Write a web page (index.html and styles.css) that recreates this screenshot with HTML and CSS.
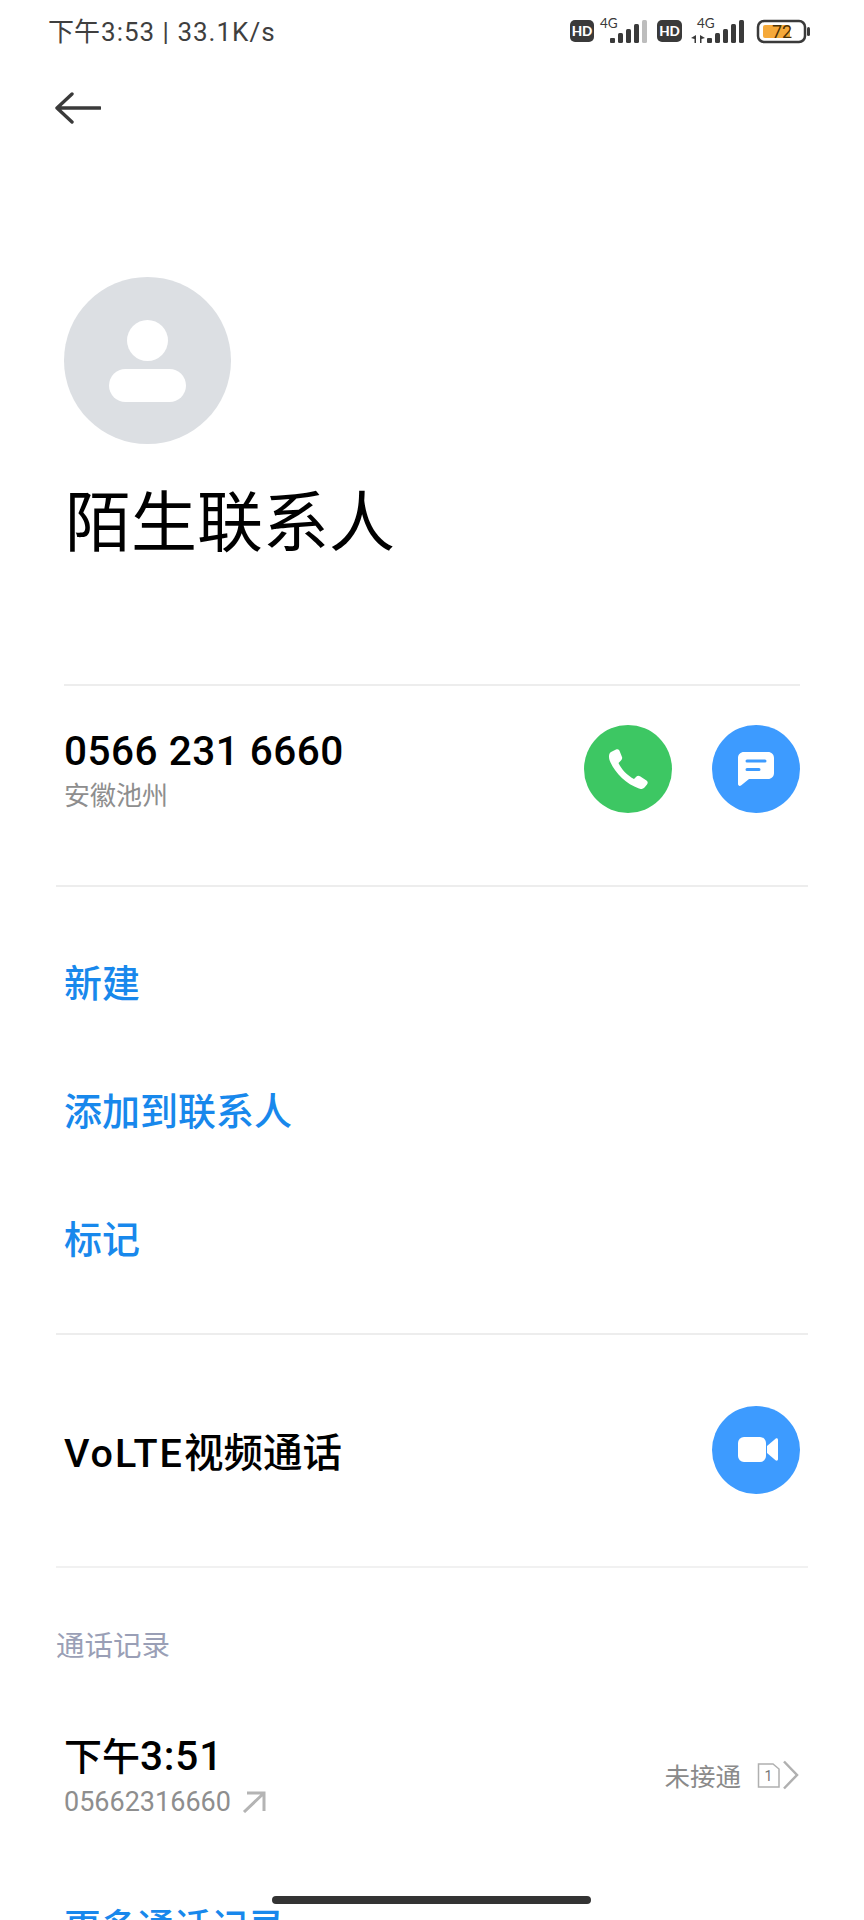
FILE: index.html
```html
<!DOCTYPE html>
<html lang="zh-CN">
<head>
<meta charset="utf-8">
<title>陌生联系人</title>
<link rel="stylesheet" href="styles.css">
</head>
<body>
<div class="screen">
  <header class="statusbar">
    <span class="status-text">下午<span class="status-latin">3:53 | 33.1K/s</span></span>
    <svg class="status-icons" width="244" height="30" viewBox="0 0 244 30">
      <rect x="0" y="5" width="24" height="22" rx="5" fill="#3a3a3a"/>
      <text x="12" y="21" class="hd">HD</text>
      <text x="30" y="13" class="net">4G</text>
      <g fill="#3a3a3a">
        <rect x="40" y="23" width="5" height="5" rx="1"/>
        <rect x="48" y="18" width="5" height="10" rx="1.500"/>
        <rect x="56" y="14" width="5" height="14" rx="1.500"/>
        <rect x="64" y="9" width="5" height="19" rx="1.500"/>
      </g>
      <rect x="72" y="5" width="5" height="23" rx="1.500" fill="#bdbdbd"/>
      <rect x="87" y="5" width="25" height="22" rx="5" fill="#3a3a3a"/>
      <text x="99.500" y="21" class="hd">HD</text>
      <text x="127" y="13" class="net">4G</text>
      <g fill="#3a3a3a">
        <path d="M121 23l5-3v8h-1.500v-4zM135 23l-5-3v8h1.500v-4z"/>
        <rect x="137" y="23" width="5" height="5" rx="1"/>
        <rect x="145" y="18" width="5" height="10" rx="1.500"/>
        <rect x="153" y="14" width="5" height="14" rx="1.500"/>
        <rect x="161" y="9" width="5" height="19" rx="1.500"/>
        <rect x="169" y="5" width="5" height="23" rx="1.500"/>
      </g>
      <rect x="188" y="6" width="47" height="21" rx="6" fill="none" stroke="#3a3a3a" stroke-width="2.500"/>
      <rect x="193" y="10" width="27" height="13" rx="2" fill="#f5a93a"/>
      <rect x="237" y="12" width="3" height="9" rx="1.500" fill="#3a3a3a"/>
      <text x="212" y="23" class="bat">72</text>
    </svg>
  </header>

  <nav class="toolbar">
    <svg width="46" height="32" viewBox="0 0 46 32" fill="none" stroke="#3a3a3a" stroke-width="3.400" stroke-linecap="round" stroke-linejoin="round">
      <path d="M2 16H45M17 2L2 16L17 30"/>
    </svg>
  </nav>

  <section class="hero">
    <div class="avatar">
      <span class="avatar-head"></span>
      <span class="avatar-body"></span>
    </div>
    <h1 class="name">陌生联系人</h1>
  </section>

  <section class="number-row">
    <div class="number-text">
      <div class="number">0566 231 6660</div>
      <div class="location">安徽池州</div>
    </div>
    <div class="actions">
      <span class="round green">
        <svg width="40" height="40" viewBox="0 0 40 40"><path fill="#fff" d="M3 3L8 .5C10 -.3 11 .5 11.600 2L14 8C14.500 9.500 14 10.500 13 11.500L10.500 14C13 20 20 27 26 30L28.500 27.500C29.500 26.500 30.500 26.300 32 27.200L38.500 31.500C40 32.600 40 34 39 35.500L36.500 38.500C35 40 33 40.500 31 39.500C18 35 6 23 1.500 11C.5 7 1 4.500 3 3Z"/></svg>
      </span>
      <span class="round blue">
        <svg width="36" height="34" viewBox="0 0 36 34"><path fill="#fff" d="M6 0H30C33.500 0 36 2.500 36 6V21C36 24.500 33.500 27 30 27H11L3 33.500C1.500 34.500 0 33.500 0 32V6C0 2.500 2.500 0 6 0Z"/><path d="M9 9H27M9 17.500H21" stroke="#3d9bff" stroke-width="3" stroke-linecap="round"/></svg>
      </span>
    </div>
  </section>

  <section class="links">
    <a class="link">新建</a>
    <a class="link">添加到联系人</a>
    <a class="link">标记</a>
  </section>

  <section class="volte-row">
    <span class="volte"><span class="volte-latin">VoLTE</span>视频通话</span>
    <span class="round blue">
      <svg class="video-icon" width="40" height="25" viewBox="0 0 40 25"><rect width="28" height="25" rx="6" fill="#fff"/><path fill="#fff" d="M29 9L37.500 1.800C38.800 .8 40 1.500 40 3V22C40 23.500 38.800 24.200 37.500 23.200L29 16Z"/></svg>
    </span>
  </section>

  <section class="history">
    <h2 class="history-title">通话记录</h2>
    <div class="call">
      <div class="call-main">
        <div class="call-time">下午<span class="time-latin">3:51</span></div>
        <div class="call-number">
          <span>05662316660</span>
          <svg width="24" height="22" viewBox="0 0 24 22" fill="none" stroke="#b4b4b4" stroke-width="3"><path d="M2 21L22 2M5 2H22V20"/></svg>
        </div>
      </div>
      <div class="call-state">
        <span>未接通</span>
        <svg width="44" height="30" viewBox="0 0 44 30" fill="none">
          <path d="M1.500 4H16L22 9V27H1.500Z" stroke="#b0b0b0" stroke-width="1.500"/>
          <text x="11.500" y="21" class="sim">1</text>
          <path d="M27 1.500L40 15L27 28.500" stroke="#b0b0b0" stroke-width="2.500"/>
        </svg>
      </div>
    </div>
    <a class="link more">更多通话记录</a>
  </section>

  <div class="home-bar"></div>
</div>
</body>
</html>
```
FILE: styles.css
```css
* { box-sizing: border-box; }
html, body { margin: 0; padding: 0; background: #fff; }
body { font-family: Roboto, "Noto Sans CJK SC", sans-serif; color: #000; }
.screen { position: relative; width: 864px; height: 1920px; overflow: hidden; background: #fff; }

.statusbar { height: 64px; display: flex; align-items: center; justify-content: space-between; padding: 0 50px 0 48px; }
.status-text { font-size: 26px; color: #3f3f3f; line-height: 64px; }
.status-latin { letter-spacing: 1px; margin-left: 1px; }
.status-icons { display: block; margin-top: -4px; }
.hd { font: 900 13.500px Lato, sans-serif; fill: #fff; text-anchor: middle; }
.net { font: 400 13.500px Lato, sans-serif; fill: #3a3a3a; }
.bat { font: 400 18px Roboto, sans-serif; fill: #4a3208; text-anchor: middle; }
.sim { font: 400 14px Roboto, sans-serif; fill: #777; text-anchor: middle; }

.toolbar { height: 90px; padding: 28px 0 0 55px; }
.toolbar svg { display: block; }

.hero { height: 532px; margin: 0 64px; padding-top: 123px; border-bottom: 2px solid #ededed; }
.avatar { position: relative; width: 167px; height: 167px; border-radius: 50%; background: #dcdfe3; }
.avatar-head { position: absolute; left: 63px; top: 43px; width: 41px; height: 41px; border-radius: 50%; background: #fff; }
.avatar-body { position: absolute; left: 45px; top: 92px; width: 77px; height: 33px; border-radius: 17px; background: #fff; }
.name { margin: 36px 0 0 1px; font-size: 66px; line-height: 88px; font-weight: 400; }

.number-row { display: flex; align-items: flex-start; justify-content: space-between; height: 201px; margin: 0 56px; padding: 39px 8px 0; border-bottom: 2px solid #ededed; }
.number-text { padding-top: 3px; }
.number { font-size: 40.500px; line-height: 46px; font-weight: 500; letter-spacing: .5px; }
.location { font-size: 26px; line-height: 36px; color: #8e8e8e; margin-top: 4px; }
.actions { display: flex; gap: 40px; }
.round { display: flex; align-items: center; justify-content: center; width: 88px; height: 88px; border-radius: 50%; flex: none; }
.green { background: #3dc763; }
.blue { background: #3d9bff; }

.links { display: flex; flex-direction: column; margin: 0 56px; padding: 33px 8px 29px; border-bottom: 2px solid #ededed; }
.link { display: block; font-size: 38px; line-height: 128px; font-weight: 500; color: #1888ec; }

.volte-row { display: flex; align-items: center; justify-content: space-between; height: 233px; margin: 0 56px; padding: 0 8px 2px; border-bottom: 2px solid #f1f1f1; }
.volte { font-size: 39.500px; font-weight: 500; }
.volte-latin { letter-spacing: 2px; }
.video-icon { margin-left: 4px; }

.history { padding: 0 64px; }
.history-title { margin: 0 0 0 -8px; padding-top: 59px; font-size: 28.500px; line-height: 40px; font-weight: 400; color: #9a9fb6; }
.call { display: flex; align-items: center; justify-content: space-between; margin-top: 63px; }
.call-time { font-size: 38px; line-height: 52px; font-weight: 500; }
.time-latin { font-size: 40.500px; letter-spacing: .8px; }
.call-number { display: flex; align-items: center; gap: 11px; margin-top: 4px; font-size: 27px; line-height: 30px; color: #8e8e8e; }
.call-state { display: flex; align-items: center; gap: 16px; margin-right: -1px; padding-top: 2px; font-size: 25.500px; color: #8a8a8a; }
.call-state svg { display: block; }
.more { font-size: 36.800px; line-height: 52px; padding-top: 85px; }

.home-bar { position: absolute; left: 272px; top: 1896px; width: 319px; height: 8px; border-radius: 4px; background: #333; }
```
